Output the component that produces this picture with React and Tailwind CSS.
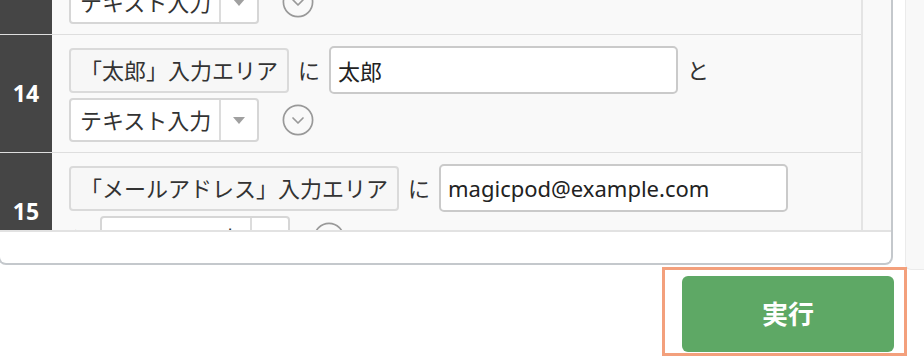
import React from 'react';

const rows = [
  { no: 13, label: '「名前」入力エリア', value: '山田' },
  { no: 14, label: '「太郎」入力エリア', value: '太郎' },
  { no: 15, label: '「メールアドレス」入力エリア', value: 'magicpod@example.com' },
];

function Caret() {
  return (
    <svg width="12" height="7" viewBox="0 0 12 7">
      <path d="M0 0 L12 0 L6 7 Z" fill="#a0a0a0" />
    </svg>
  );
}

function CircleChevron() {
  return (
    <svg width="32" height="32" viewBox="0 0 32 32" className="ml-[14px]">
      <circle cx="16" cy="16" r="14.6" fill="none" stroke="#999" strokeWidth="1.7" />
      <path d="M11 14 L16 19 L21 14" fill="none" stroke="#999" strokeWidth="1.7" strokeLinecap="round" strokeLinejoin="round" />
    </svg>
  );
}

function StepRow({ step }) {
  return (
    <div className="flex border-b border-[#dedede]">
      <div className="w-[52px] shrink-0 bg-[#454545] flex items-center justify-center text-white font-bold text-[23px]">
        {step.no}
      </div>
      <div className="flex-1 pl-[17px] pr-[50px] pt-[11px] pb-[10px] flex flex-wrap items-center gap-x-[9px] gap-y-[4px] text-[22px] text-[#333]">
        <div className="h-[45px] px-[9px] flex items-center border-2 border-[#dadada] rounded-[4px] bg-[#f7f7f7] whitespace-nowrap leading-none">
          {step.label}
        </div>
        <span className="leading-none">に</span>
        <input
          readOnly
          defaultValue={step.value}
          className="w-[349px] h-[48px] px-[7px] border-2 border-[#cacaca] rounded-[5px] bg-white text-[#222] outline-none"
        />
        <span className="leading-none">と</span>
        <div className="h-[44px] flex items-stretch border-2 border-[#d6d6d6] rounded-[4px] bg-white">
          <div className="pl-[9px] pr-[8px] flex items-center whitespace-nowrap leading-none text-[#333]">テキスト入力</div>
          <div className="w-[38px] border-l-2 border-[#dcdcdc] flex items-center justify-center">
            <Caret />
          </div>
        </div>
        <CircleChevron />
      </div>
    </div>
  );
}

export default function App() {
  return (
    <div
      className="relative w-[924px] h-[364px] overflow-hidden bg-white"
      style={{ fontFamily: '"Noto Sans", "Noto Sans CJK JP", sans-serif' }}
    >
      <div className="flex items-start">
        <div className="-ml-[2px] w-[895px] h-[265px] border-2 border-t-0 border-[#c4c8cc] rounded-b-[8px] bg-white overflow-hidden">
          <div className="flex h-[232px] border-b-2 border-[#e2e2e2]">
            <div className="w-[863px] border-r-2 border-[#e4e4e4] bg-[#f9f9f9] overflow-hidden">
              <div className="-mt-[83px]">
                {rows.map((s) => (
                  <StepRow key={s.no} step={s} />
                ))}
              </div>
            </div>
            <div className="flex-1 bg-[#f9f9f9]" />
          </div>
        </div>
        <div className="ml-[12px] flex-1 h-[270px] border-l border-b border-[#ebebeb] rounded-bl-[6px] bg-[#f8f8f8]" />
      </div>

      <div className="flex justify-end pr-[30px] mt-[6px]">
        <button className="w-[212px] h-[76px] rounded-[6px] bg-[#5ea865] text-white font-bold text-[26px]">
          実行
        </button>
      </div>

      <div className="absolute left-[662px] top-[267px] w-[245px] h-[89px] border-[3px] border-[#f3a07c] pointer-events-none" />
    </div>
  );
}
